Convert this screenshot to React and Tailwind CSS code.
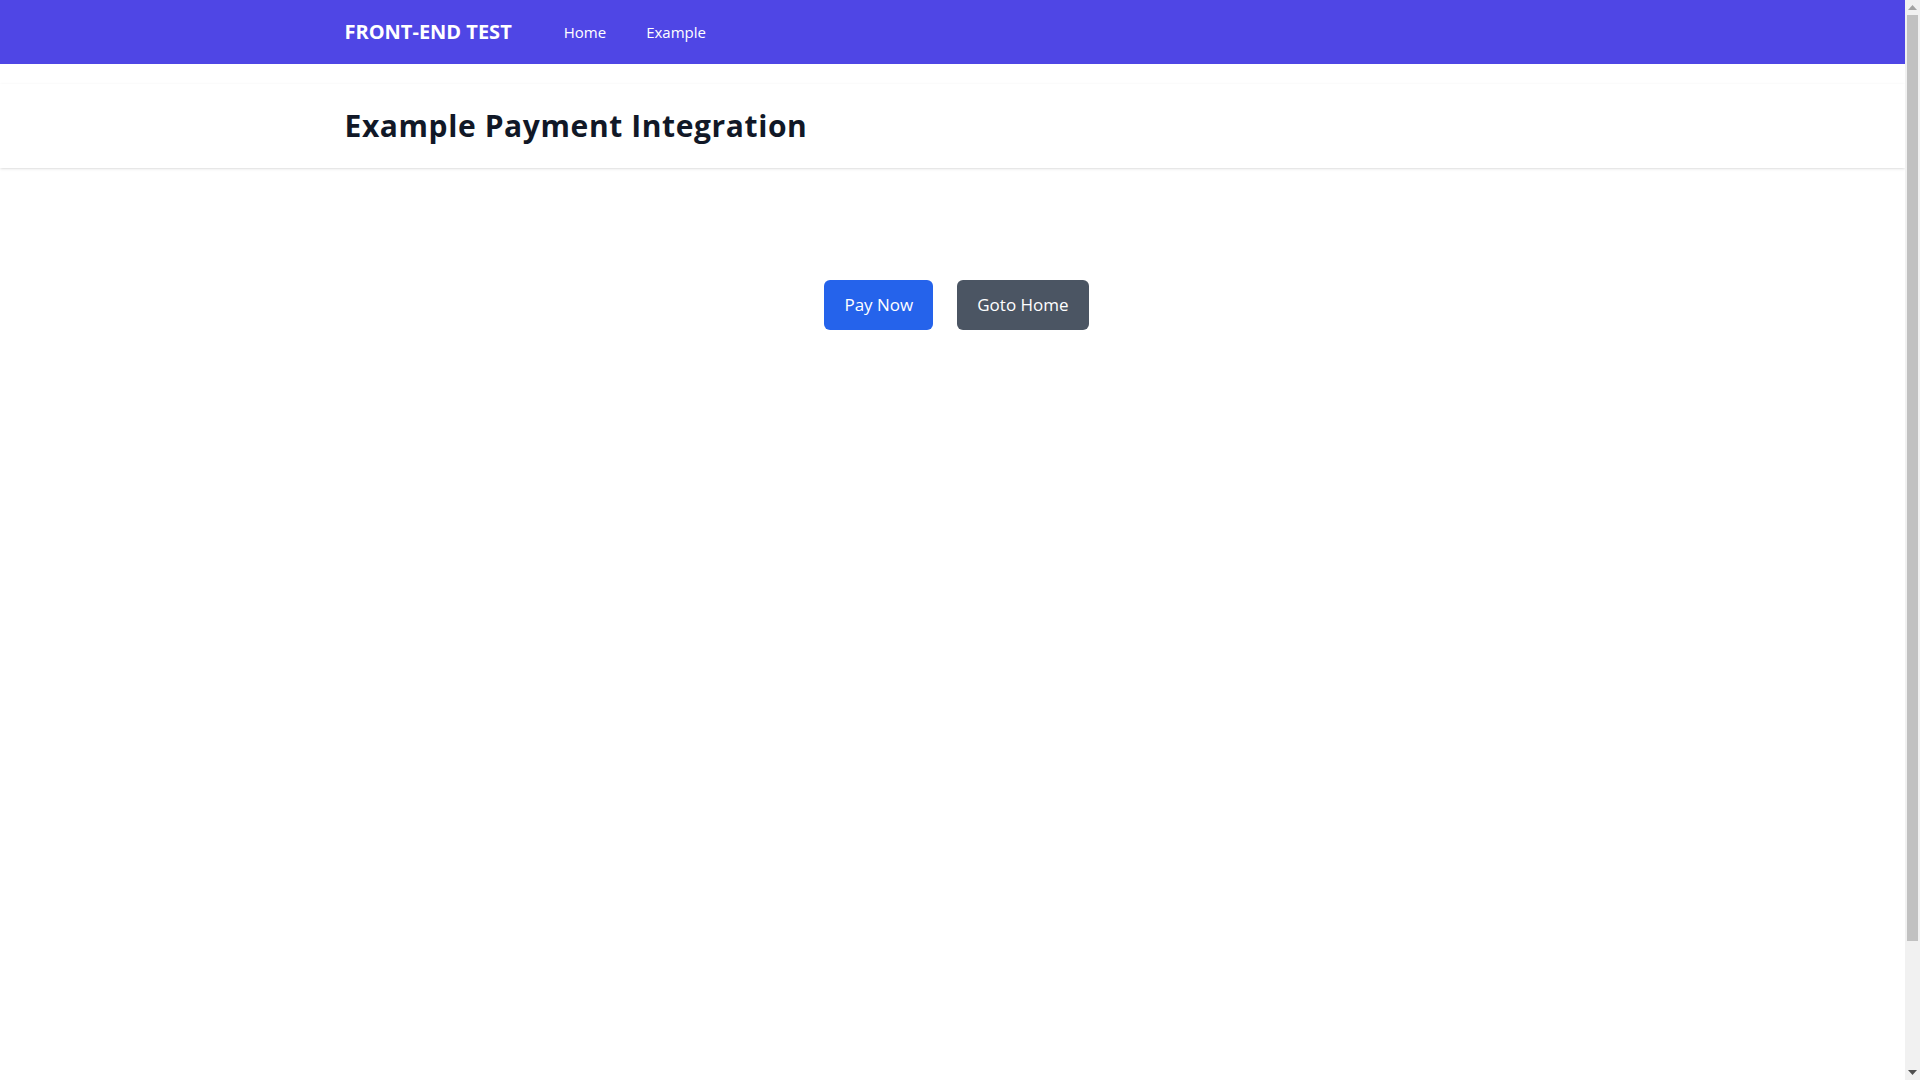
import React from "react";

const ScrollBar = () => (
  <div className="w-[15px] shrink-0 bg-[#f1f1f1] flex flex-col items-center">
    <svg width="9" height="5" viewBox="0 0 9 5" className="mt-[5px]">
      <path d="M4.5 0 L9 5 L0 5 Z" fill="#a3a3a3" />
    </svg>
    <div className="mt-[5px] w-[11px] h-[926px] bg-[#c1c1c1]" />
    <div className="flex-1" />
    <svg width="9" height="5" viewBox="0 0 9 5" className="mb-[5px]">
      <path d="M0 0 L9 0 L4.5 5 Z" fill="#505050" />
    </svg>
  </div>
);

const App = () => {
  return (
    <div className="h-screen flex bg-white font-['Open_Sans',sans-serif]">
      <div className="flex-1 min-w-0 overflow-hidden">
        {/* Top Navbar */}
        <nav className="bg-[#4f46e5]">
          <div className="max-w-7xl mx-auto px-4 sm:px-6 lg:px-8">
            <div className="flex items-center h-16">
              <span className="text-white text-xl font-bold">FRONT-END TEST</span>
              <div className="ml-10 flex items-baseline space-x-4">
                <a href="#" className="text-white px-3 py-2 rounded-md text-[15px] font-medium">
                  Home
                </a>
                <a href="#" className="text-white px-3 py-2 rounded-md text-[15px] font-medium">
                  Example
                </a>
              </div>
            </div>
          </div>
        </nav>

        {/* Page Header */}
        <header className="bg-white shadow mt-5">
          <div className="max-w-7xl mx-auto py-6 px-4 sm:px-6 lg:px-8">
            <h1 className="text-3xl font-bold text-[#111827] tracking-[0.02em]">
              Example Payment Integration
            </h1>
          </div>
        </header>

        {/* Content */}
        <main>
          <div className="flex justify-center gap-6 pt-[112px] pl-2">
            <button className="bg-[#2563eb] text-white text-[17px] font-medium px-5 h-[50px] rounded-md">
              Pay Now
            </button>
            <button className="bg-[#4b5563] text-white text-[17px] font-medium px-5 h-[50px] rounded-md">
              Goto Home
            </button>
          </div>
        </main>
      </div>
      <ScrollBar />
    </div>
  );
};

export default App;
